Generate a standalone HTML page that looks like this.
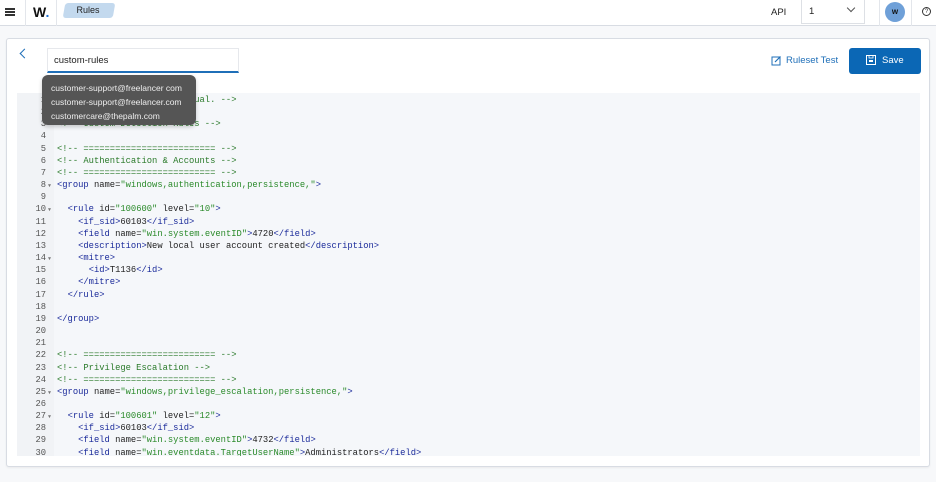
<!DOCTYPE html>
<html><head><meta charset="utf-8"><style>
*{box-sizing:border-box;margin:0;padding:0}
body{width:936px;height:482px;background:#f7f8fa;font-family:"Liberation Sans",sans-serif;position:relative;overflow:hidden}
.top{position:absolute;left:0;top:0;width:936px;height:26px;background:#fff;border-bottom:1px solid #d8dce3}
.vl{position:absolute;top:0;width:1px;height:26px;background:#e3e6eb}
.card{position:absolute;left:6px;top:38px;width:924px;height:429px;background:#fff;border:1px solid #d8dce3;border-radius:3px;box-shadow:0 1px 2px rgba(0,0,0,.06)}
.code{position:absolute;left:17px;top:93px;width:903px;height:363px;background:#f5f7fa;overflow:hidden;font-family:"Liberation Mono",monospace;font-size:8.8px}
.gut{position:absolute;left:0;top:0;width:37px;height:363px;background:#f1f3f6}
.ln{position:absolute;left:0;width:29px;text-align:right;color:#555}
.tx{position:absolute;left:40px;white-space:pre;color:#222}
.fold{position:absolute;left:31px;font-size:5px;color:#777}
.c{color:#2a7a2a}.t{color:#1a2a9a}.s{color:#2a8a2a}
.tip{position:absolute;left:42px;top:75px;width:154px;height:50px;background:#555;border-radius:6px;color:#eee;font-size:8.5px;line-height:14px;padding:6px 9px;box-shadow:0 2px 4px rgba(0,0,0,.2)}
</style></head><body>
<div class="top">
 <div style="position:absolute;left:5px;top:8px;width:10px;height:2px;background:#333;box-shadow:0 3px 0 #333,0 6px 0 #333"></div>
 <div class="vl" style="left:25px"></div>
 <div style="position:absolute;left:33px;top:4px;font-weight:bold;font-size:14px;color:#111">W<span style="color:#1f6fd0">.</span></div>
 <div class="vl" style="left:56px"></div>
 <div style="position:absolute;left:64px;top:3px;width:50px;height:15px;background:#c3d9ee;border-radius:3px;transform:skewX(-10deg)"></div>
 <div style="position:absolute;left:64px;top:5px;width:48px;text-align:center;font-size:9px;color:#222">Rules</div>
 <div style="position:absolute;left:771px;top:7px;font-size:9.5px;color:#222">API</div>
 <div style="position:absolute;left:801px;top:0;width:64px;height:24px;border:1px solid #dde0e5;border-top:none"></div>
 <div style="position:absolute;left:809px;top:6px;font-size:9.5px;color:#222">1</div>
 <div style="position:absolute;left:848px;top:5px;width:6px;height:6px;border-right:1px solid #555;border-bottom:1px solid #555;transform:rotate(45deg)"></div>
 <div class="vl" style="left:879px"></div>
 <div style="position:absolute;left:885px;top:2px;width:20px;height:20px;border-radius:50%;background:#6fa0d8;text-align:center;font-size:8px;font-weight:bold;line-height:20px;color:#111">w</div>
 <div class="vl" style="left:911px"></div>
 <div style="position:absolute;left:922px;top:7px;width:9px;height:9px;border:1px solid #333;border-radius:50%;font-size:6px;text-align:center;line-height:8px;color:#333">?</div>
</div>
<div class="card"></div>
<div style="position:absolute;left:21px;top:50px;width:7px;height:7px;border-left:1.2px solid #1f6fb8;border-bottom:1.2px solid #1f6fb8;transform:rotate(45deg)"></div>
<div style="position:absolute;left:47px;top:48px;width:192px;height:25px;background:#fff;border:1px solid #e6e8ec;border-bottom:2px solid #1f6fb8"></div>
<div style="position:absolute;left:54px;top:55px;font-size:9.5px;color:#222">custom-rules</div>
<svg style="position:absolute;left:771px;top:55px" width="11" height="11" viewBox="0 0 11 11"><rect x="1" y="2" width="8" height="8" fill="none" stroke="#1f6fb8"/><path d="M4 7 L9.5 1.5" stroke="#1f6fb8" stroke-width="1.2"/></svg>
<div style="position:absolute;left:786px;top:55px;font-size:9.5px;color:#1f6fb8">Ruleset Test</div>
<div style="position:absolute;left:849px;top:48px;width:72px;height:26px;background:#0b67b5;border-radius:3px"></div>
<svg style="position:absolute;left:866px;top:55px" width="10" height="10" viewBox="0 0 10 10"><rect x="0.5" y="0.5" width="9" height="9" fill="none" stroke="#fff"/><rect x="3" y="5" width="4" height="2" fill="#fff"/><rect x="3" y="0.5" width="4" height="2.5" fill="none" stroke="#fff" stroke-width=".8"/></svg>
<div style="position:absolute;left:882px;top:55px;font-size:9.5px;color:#fff">Save</div>
<div class="code" id="code"><div class="gut"></div></div>
<div class="tip">customer-support@freelancer com<br>customer-support@freelancer.com<br>customercare@thepalm.com</div>
<script>
const L=[
'<span class="c">&lt;!-- Custom rules, see manual. --&gt;</span>',
'',
'<span class="c">&lt;!-- Custom Detection Rules --&gt;</span>',
'',
'<span class="c">&lt;!-- ========================= --&gt;</span>',
'<span class="c">&lt;!-- Authentication &amp; Accounts --&gt;</span>',
'<span class="c">&lt;!-- ========================= --&gt;</span>',
'<span class="t">&lt;group</span> name=<span class="s">"windows,authentication,persistence,"</span><span class="t">&gt;</span>',
'',
'  <span class="t">&lt;rule</span> id=<span class="s">"100600"</span> level=<span class="s">"10"</span><span class="t">&gt;</span>',
'    <span class="t">&lt;if_sid&gt;</span>60103<span class="t">&lt;/if_sid&gt;</span>',
'    <span class="t">&lt;field</span> name=<span class="s">"win.system.eventID"</span><span class="t">&gt;</span>4720<span class="t">&lt;/field&gt;</span>',
'    <span class="t">&lt;description&gt;</span>New local user account created<span class="t">&lt;/description&gt;</span>',
'    <span class="t">&lt;mitre&gt;</span>',
'      <span class="t">&lt;id&gt;</span>T1136<span class="t">&lt;/id&gt;</span>',
'    <span class="t">&lt;/mitre&gt;</span>',
'  <span class="t">&lt;/rule&gt;</span>',
'',
'<span class="t">&lt;/group&gt;</span>',
'','',
'<span class="c">&lt;!-- ========================= --&gt;</span>',
'<span class="c">&lt;!-- Privilege Escalation --&gt;</span>',
'<span class="c">&lt;!-- ========================= --&gt;</span>',
'<span class="t">&lt;group</span> name=<span class="s">"windows,privilege_escalation,persistence,"</span><span class="t">&gt;</span>',
'',
'  <span class="t">&lt;rule</span> id=<span class="s">"100601"</span> level=<span class="s">"12"</span><span class="t">&gt;</span>',
'    <span class="t">&lt;if_sid&gt;</span>60103<span class="t">&lt;/if_sid&gt;</span>',
'    <span class="t">&lt;field</span> name=<span class="s">"win.system.eventID"</span><span class="t">&gt;</span>4732<span class="t">&lt;/field&gt;</span>',
'    <span class="t">&lt;field</span> name=<span class="s">"win.eventdata.TargetUserName"</span><span class="t">&gt;</span>Administrators<span class="t">&lt;/field&gt;</span>'];
const folds=[8,10,14,25,27];let h='';
L.forEach((l,i)=>{const y=2+i*12.16;h+=`<div class="ln" style="top:${y}px">${i+1}</div><div class="tx" style="top:${y}px">${l}</div>`;if(folds.includes(i+1))h+=`<div class="fold" style="top:${y+3}px">▼</div>`;});
document.getElementById('code').insertAdjacentHTML('beforeend',h);
</script>
</body></html>
